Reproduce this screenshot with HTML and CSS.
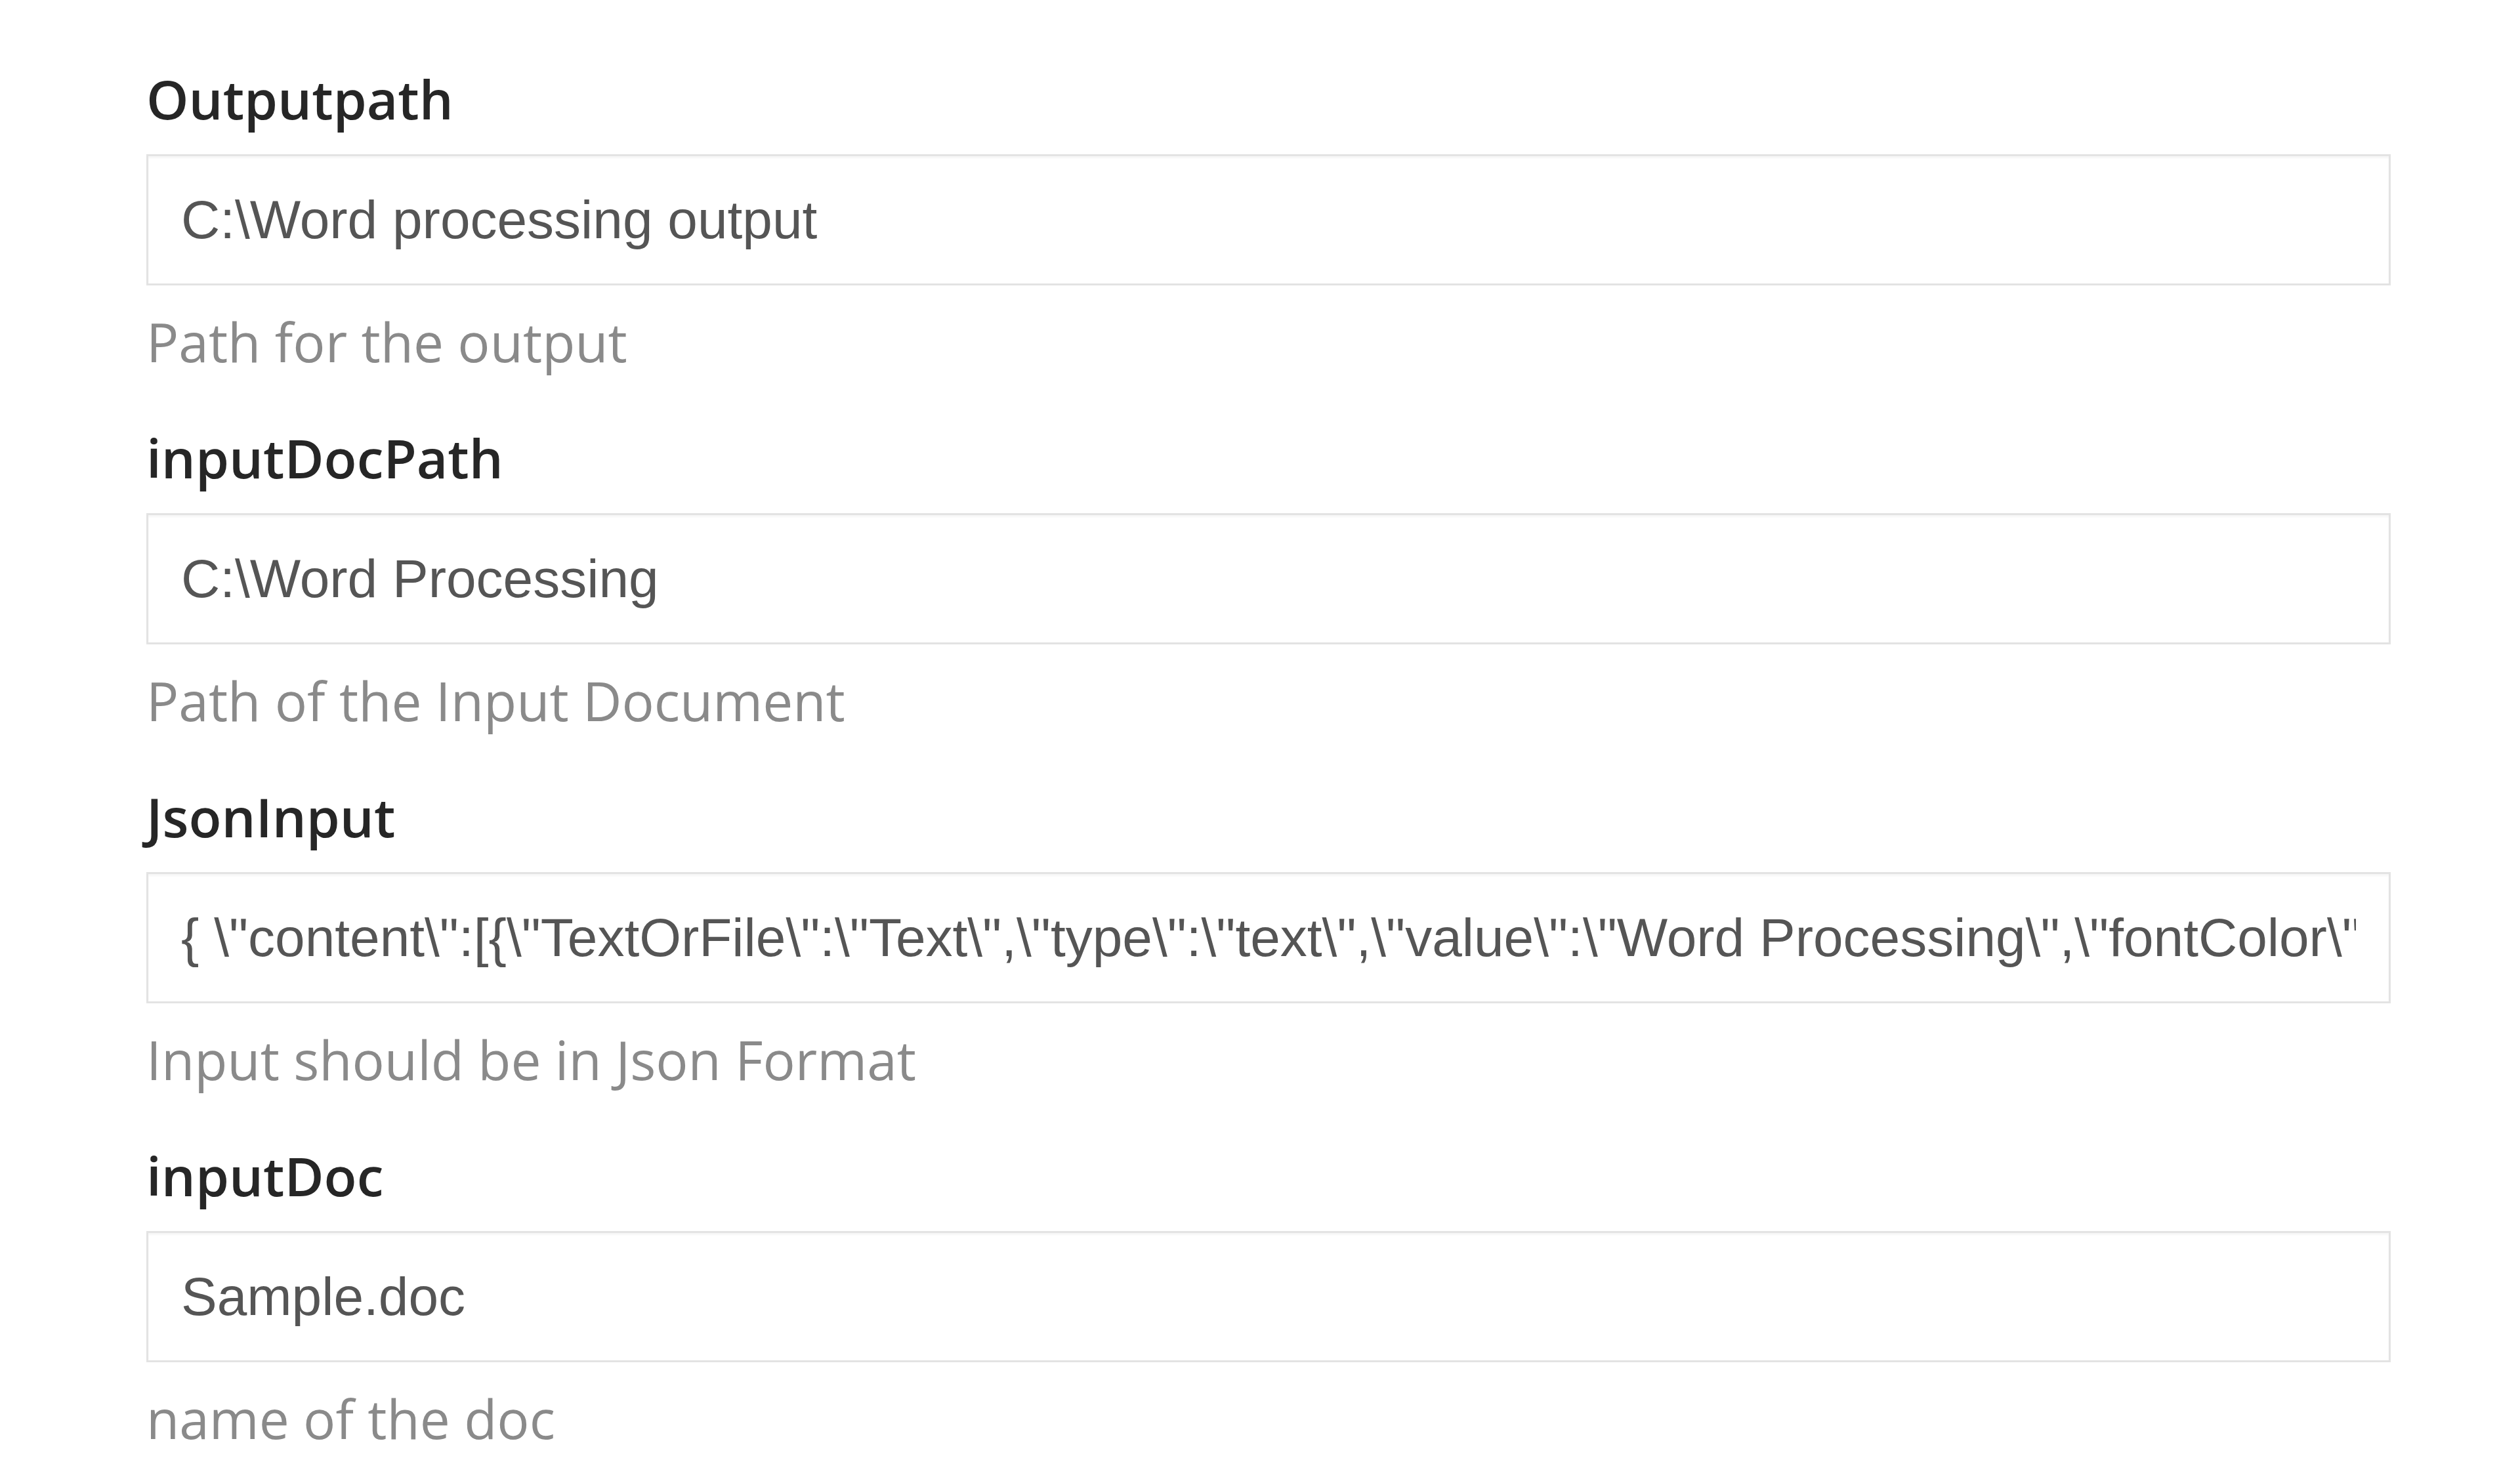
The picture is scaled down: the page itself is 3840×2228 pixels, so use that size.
FILE: index.html
```html
<!DOCTYPE html>
<html lang="en">
<head>
    <meta charset="UTF-8">
    <title>Word Processing Parameters</title>
    <link rel="stylesheet" href="styles.css">
</head>
<body>
<form class="param-form">
    <!-- output path -->
    <div class="form-group">
        <label for="outputPath">Outputpath</label>
        <input type="text" id="outputPath" class="form-control" value="C:\Word processing output">
        <p class="help">Path for the output</p>
    </div>

    <!-- input doc path -->
    <div class="form-group">
        <label for="inputDocPath">inputDocPath</label>
        <input type="text" id="inputDocPath" class="form-control" value="C:\Word Processing">
        <p class="help">Path of the Input Document</p>
    </div>

    <!-- json input -->
    <div class="form-group">
        <label for="jsonInput">JsonInput</label>
        <input type="text" id="jsonInput" class="form-control" value="{ \&quot;content\&quot;:[{\&quot;TextOrFile\&quot;:\&quot;Text\&quot;,\&quot;type\&quot;:\&quot;text\&quot;,\&quot;value\&quot;:\&quot;Word Processing\&quot;,\&quot;fontColor\&quot;:\&quot;#000000\&quot;,\&quot;fontSize\&quot;:\&quot;12\&quot;}]}">
        <p class="help">Input should be in Json Format</p>
    </div>

    <!-- input doc -->
    <div class="form-group">
        <label for="inputDoc">inputDoc</label>
        <input type="text" id="inputDoc" class="form-control" value="Sample.doc">
        <p class="help">name of the doc</p>
    </div>
</form>
</body>
</html>
```

FILE: styles.css
```css
body {
    margin: 0;
    background-color: #fff;
    font-family: "Open Sans", sans-serif;
}

.param-form {
    padding: 95px 0 0 223px;
    width: 3420px;
}

.form-group {
    margin-bottom: 64px;
}

label {
    display: block;
    font-size: 82px;
    line-height: 110px;
    font-weight: 600;
    color: #262626;
    margin-bottom: 30px;
}

.form-control {
    display: block;
    box-sizing: border-box;
    width: 100%;
    height: 200px;
    padding: 0 50px;
    border: 3px solid #e3e3e3;
    box-shadow: inset 0 3px 3px rgba(0, 0, 0, 0.04);
    font-family: "Liberation Sans", Arial, sans-serif;
    font-size: 82px;
    color: #555;
    background-color: #fff;
    outline: none;
}

.help {
    margin: 28px 0 0;
    font-size: 82px;
    line-height: 115px;
    color: #8a8a8a;
}
```
